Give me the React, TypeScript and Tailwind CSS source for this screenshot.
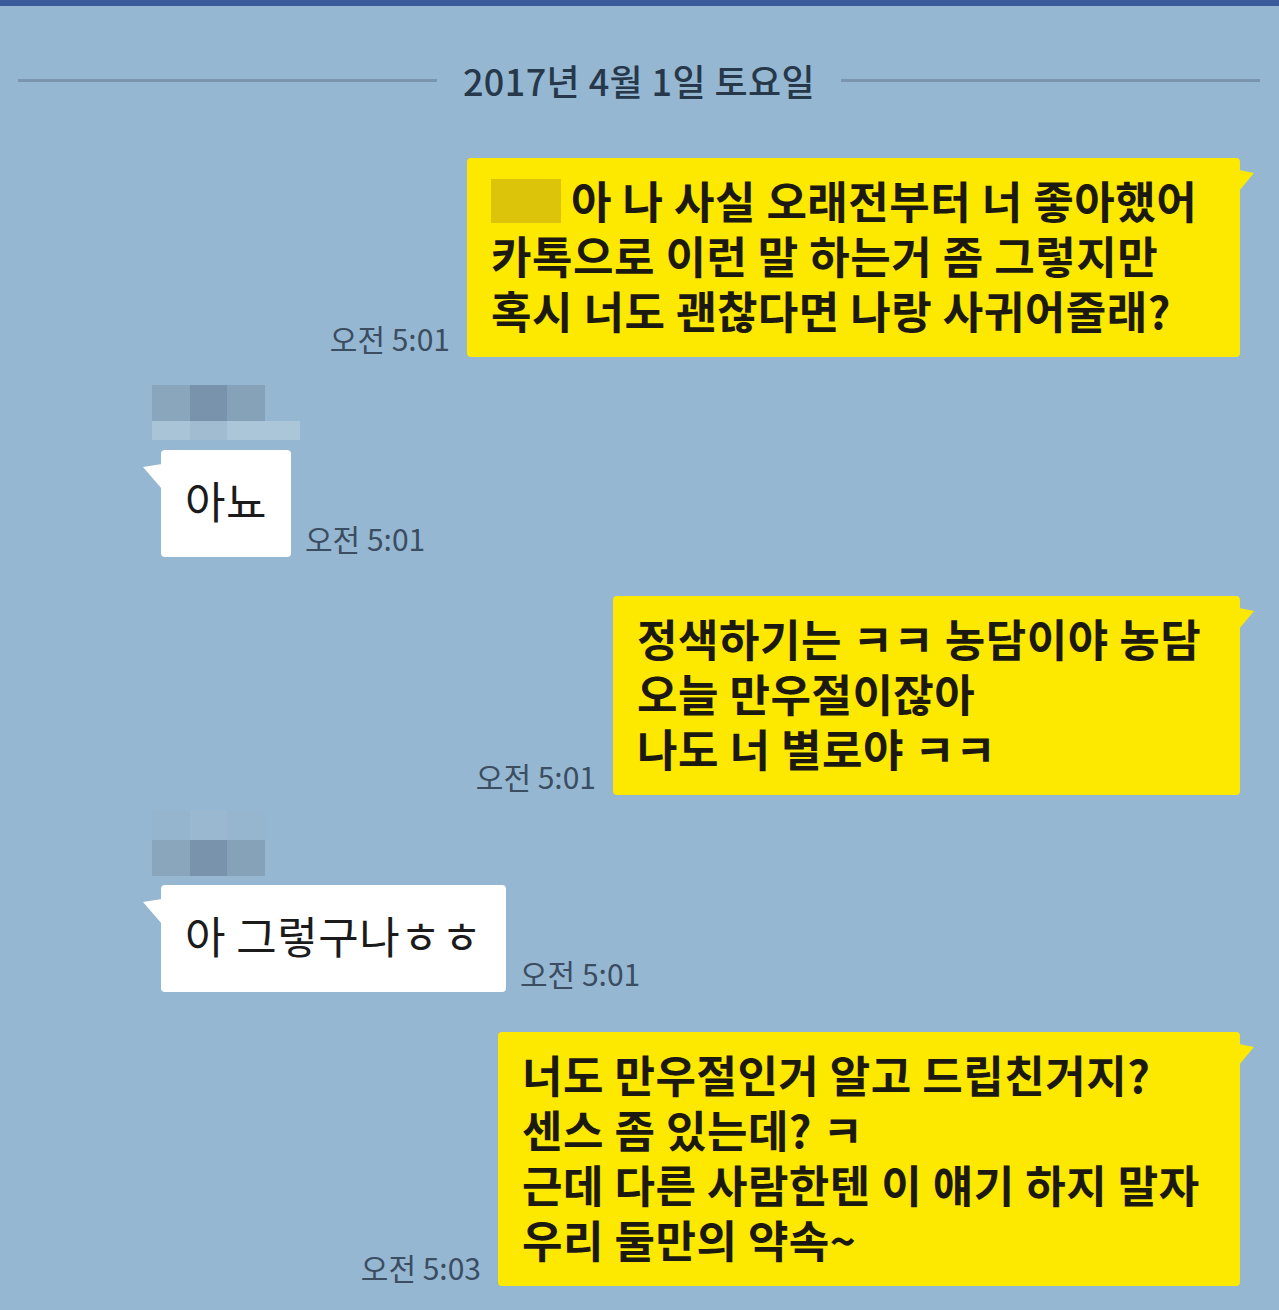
const sent = [
  {
    time: '오전 5:01',
    width: 'w-[773px]',
    lines: ['아 나 사실 오래전부터 너 좋아했어', '카톡으로 이런 말 하는거 좀 그렇지만', '혹시 너도 괜찮다면 나랑 사귀어줄래?'],
    hidden: true,
  },
  {
    time: '오전 5:01',
    width: 'w-[627px]',
    lines: ['정색하기는 ㅋㅋ 농담이야 농담', '오늘 만우절이잖아', '나도 너 별로야 ㅋㅋ'],
  },
  {
    time: '오전 5:03',
    width: 'w-[742px]',
    lines: ['너도 만우절인거 알고 드립친거지?', '센스 좀 있는데? ㅋ', '근데 다른 사람한텐 이 얘기 하지 말자', '우리 둘만의 약속~'],
  },
];

function Time({ children }: { children: string }) {
  return (
    <span className="mb-[3px] whitespace-nowrap text-[30px] leading-[32px] text-[#3a4d61]">
      {children}
    </span>
  );
}

function SentBubble({ msg, className }: { msg: (typeof sent)[number]; className?: string }) {
  return (
    <div className={`flex items-end justify-end gap-[17px] pr-[39px] ${className ?? ''}`}>
      <Time>{msg.time}</Time>
      <div
        className={`relative ${msg.width} rounded-[4px] bg-[#fde800] pl-[24px] pt-[15px] pb-[19px] text-[44px] font-bold leading-[55px] tracking-[0.5px] text-[#1c1a10] whitespace-nowrap`}
      >
        {/* tail */}
        <svg className="absolute right-[-15px] top-[12px]" width="16" height="22" viewBox="0 0 16 22">
          <polygon points="0,0 15,3 0,21" fill="#fde800" />
        </svg>
        {msg.lines.map((line, i) => (
          <div key={i} className="flex items-center">
            {msg.hidden && i === 0 && (
              <span className="mr-[10px] inline-block h-[44px] w-[70px] bg-[#dcc40a]" />
            )}
            <span>{line}</span>
          </div>
        ))}
      </div>
    </div>
  );
}

function BlurName({ top }: { top: 'strip' | 'above' }) {
  return (
    <div className="ml-[152px] flex flex-col">
      {top === 'above' && (
        <div className="flex h-[30px]">
          <div className="w-[38px] bg-[#95b5ce]" />
          <div className="w-[37px] bg-[#9ab8cf]" />
          <div className="w-[38px] bg-[#96b6cf]" />
        </div>
      )}
      <div className="flex h-[36px]">
        <div className="w-[38px] bg-[#89a6bd]" />
        <div className="w-[37px] bg-[#7893ab]" />
        <div className="w-[38px] bg-[#86a2b9]" />
      </div>
      {top === 'strip' && (
        <div className="flex h-[19px] w-[148px]">
          <div className="w-[38px] bg-[#a9c3d7]" />
          <div className="w-[37px] bg-[#a1bbd1]" />
          <div className="flex-1 bg-[#abc5d9]" />
        </div>
      )}
    </div>
  );
}

function ReceivedBubble({ text, width, time }: { text: string; width: string; time: string }) {
  return (
    <div className="flex items-end gap-[14px] pl-[161px]">
      <div
        className={`relative ${width} rounded-[4px] bg-white pl-[24px] pt-[23px] pb-[29px] text-[44px] leading-[55px] tracking-[0.5px] text-[#1b1b1b] whitespace-nowrap`}
      >
        <svg className="absolute left-[-18px] top-[14px]" width="19" height="26" viewBox="0 0 19 26">
          <polygon points="19,0 0,3 19,25" fill="#ffffff" />
        </svg>
        {text}
      </div>
      <Time>{time}</Time>
    </div>
  );
}

export default function App() {
  return (
    <div className="min-h-screen w-full overflow-hidden bg-[#96b7d1] font-['Noto_Sans_CJK_KR','Noto_Sans',sans-serif]">
      <div className="h-[6px] bg-[#3b5a9b]" />

      {/* Date divider */}
      <div className="mt-[54px] flex h-[40px] items-center gap-[26px] pl-[18px] pr-[19px]">
        <div className="h-[3px] flex-1 bg-[#7a96ae]" />
        <span className="text-[36px] font-medium leading-[40px] tracking-[0.4px] text-[#26384a]">
          2017년 4월 1일 토요일
        </span>
        <div className="h-[3px] flex-1 bg-[#7a96ae]" />
      </div>

      <div className="flex flex-col">
        <SentBubble msg={sent[0]} className="mt-[58px]" />

        <div className="mt-[28px]">
          <BlurName top="strip" />
        </div>
        <div className="mt-[10px]">
          <ReceivedBubble text="아뇨" width="w-[130px]" time="오전 5:01" />
        </div>

        <SentBubble msg={sent[1]} className="mt-[39px]" />

        <div className="mt-[15px]">
          <BlurName top="above" />
        </div>
        <div className="mt-[9px]">
          <ReceivedBubble text="아 그렇구나ㅎㅎ" width="w-[345px]" time="오전 5:01" />
        </div>

        <SentBubble msg={sent[2]} className="mt-[40px]" />
      </div>
    </div>
  );
}
